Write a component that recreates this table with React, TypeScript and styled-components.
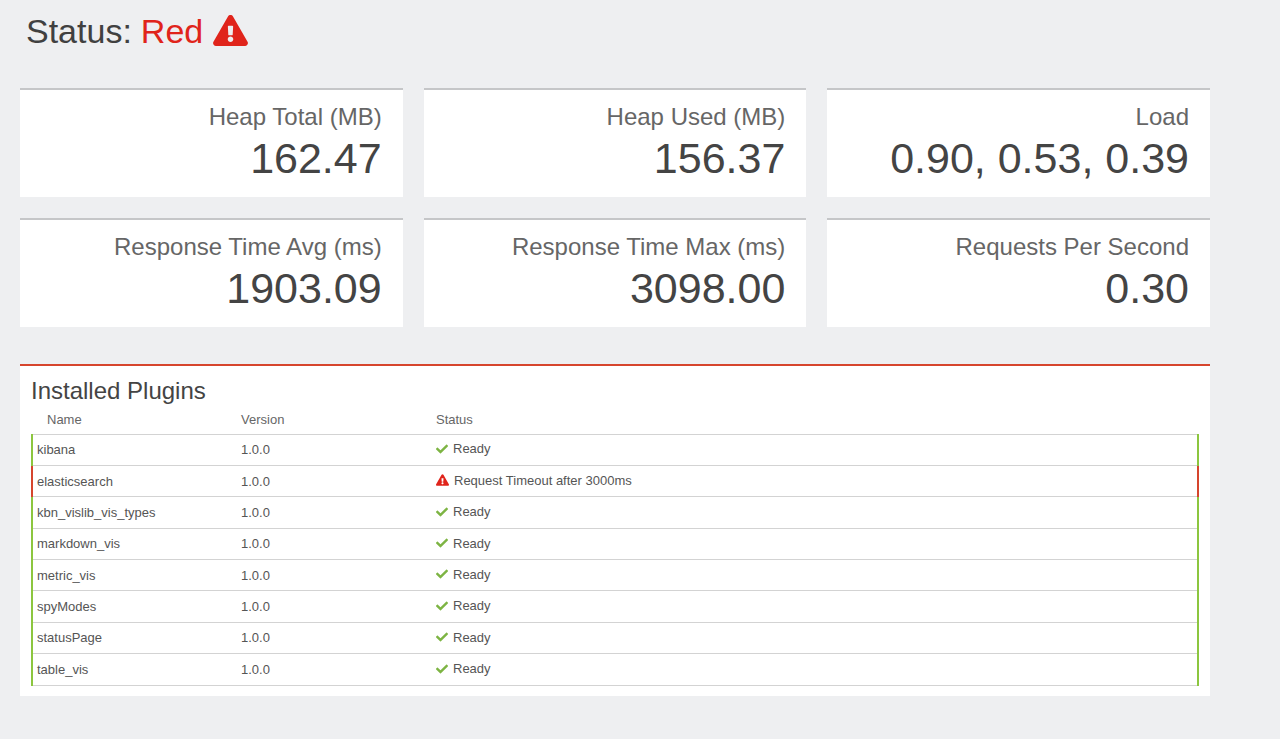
import React from "react";
import styled, { createGlobalStyle } from "styled-components";
import { FaCheck, FaExclamationTriangle } from "react-icons/fa";

const GlobalStyle = createGlobalStyle`
  html, body {
    margin: 0;
    padding: 0;
    background-color: #eeeff1;
    font-family: "Liberation Sans", Arial, sans-serif;
  }
`;

const Page = styled.div`
  width: 1190px;
  padding: 12px 70px 40px 20px;
`;

const Title = styled.h1`
  display: flex;
  align-items: center;
  margin: 0 0 37px 6px;
  font-size: 34px;
  line-height: 39px;
  font-weight: normal;
  color: #404040;
`;

const StatusWord = styled.span`
  color: #e0241b;
  margin-left: 9px;
`;

const TitleIcon = styled(FaExclamationTriangle)`
  color: #e0241b;
  width: 35px;
  height: 31px;
  margin-left: 10px;
  margin-top: -3px;
`;

const MetricGrid = styled.div`
  display: grid;
  grid-template-columns: repeat(3, 1fr);
  gap: 21px;
`;

const MetricCard = styled.div`
  box-sizing: border-box;
  height: 109px;
  background-color: #fff;
  border-top: 2px solid #c5c6c8;
  padding: 14px 21px 17px;
  text-align: right;
`;

const MetricLabel = styled.div`
  font-size: 24px;
  line-height: 26px;
  color: #666;
`;

const MetricValue = styled.div`
  margin-top: 6px;
  font-size: 43px;
  line-height: 44px;
  color: #444;
`;

const PluginPanel = styled.section`
  margin-top: 37px;
  background-color: #fff;
  border-top: 2px solid #d6452d;
  padding: 12px 11px 10px;
`;

const PanelTitle = styled.h2`
  margin: 0;
  font-size: 24px;
  line-height: 25px;
  font-weight: normal;
  color: #444;
`;

const Table = styled.table`
  width: 100%;
  table-layout: fixed;
  border-collapse: collapse;
  font-size: 13px;
  color: #555;
`;

const HeadCell = styled.th<{ $first?: boolean }>`
  text-align: left;
  font-weight: normal;
  color: #666;
  height: 31px;
  padding: 3px 0 0 ${(p) => (p.$first ? "15px" : "4px")};
  box-sizing: border-box;
  border-bottom: 1px solid #d3d3d3;
`;

const Row = styled.tr<{ $ok: boolean }>`
  height: 31.375px;
  border-bottom: 1px solid #d3d3d3;
  & > td:first-child {
    border-left: 2px solid ${(p) => (p.$ok ? "#8cc63f" : "#d6452d")};
  }
  & > td:last-child {
    border-right: 2px solid ${(p) => (p.$ok ? "#8cc63f" : "#d6452d")};
  }
`;

const Cell = styled.td`
  padding: 0 0 0 4px;
  vertical-align: middle;
`;

const StatusText = styled.span`
  display: inline-flex;
  align-items: center;
  gap: 5px;
`;

const ReadyIcon = styled(FaCheck)`
  color: #7db443;
  width: 12px;
  height: 12px;
`;

const WarnIcon = styled(FaExclamationTriangle)`
  color: #e0241b;
  width: 13px;
  height: 12px;
`;

const metrics = [
  { label: "Heap Total (MB)", value: "162.47" },
  { label: "Heap Used (MB)", value: "156.37" },
  { label: "Load", value: "0.90, 0.53, 0.39" },
  { label: "Response Time Avg (ms)", value: "1903.09" },
  { label: "Response Time Max (ms)", value: "3098.00" },
  { label: "Requests Per Second", value: "0.30" },
];

const plugins = [
  { name: "kibana", ok: true, message: "Ready" },
  { name: "elasticsearch", ok: false, message: "Request Timeout after 3000ms" },
  { name: "kbn_vislib_vis_types", ok: true, message: "Ready" },
  { name: "markdown_vis", ok: true, message: "Ready" },
  { name: "metric_vis", ok: true, message: "Ready" },
  { name: "spyModes", ok: true, message: "Ready" },
  { name: "statusPage", ok: true, message: "Ready" },
  { name: "table_vis", ok: true, message: "Ready" },
];

const App = () => {
  return (
    <Page>
      <GlobalStyle />
      <Title>
        Status:<StatusWord>Red</StatusWord>
        <TitleIcon />
      </Title>
      <MetricGrid>
        {metrics.map((m) => (
          <MetricCard key={m.label}>
            <MetricLabel>{m.label}</MetricLabel>
            <MetricValue>{m.value}</MetricValue>
          </MetricCard>
        ))}
      </MetricGrid>
      <PluginPanel>
        <PanelTitle>Installed Plugins</PanelTitle>
        <Table>
          <colgroup>
            <col style={{ width: 205 }} />
            <col style={{ width: 195 }} />
            <col />
          </colgroup>
          <thead>
            <tr>
              <HeadCell $first>Name</HeadCell>
              <HeadCell>Version</HeadCell>
              <HeadCell>Status</HeadCell>
            </tr>
          </thead>
          <tbody>
            {plugins.map((p) => (
              <Row key={p.name} $ok={p.ok}>
                <Cell>{p.name}</Cell>
                <Cell>1.0.0</Cell>
                <Cell>
                  <StatusText>
                    {p.ok ? <ReadyIcon /> : <WarnIcon />}
                    {p.message}
                  </StatusText>
                </Cell>
              </Row>
            ))}
          </tbody>
        </Table>
      </PluginPanel>
    </Page>
  );
};

export default App;
